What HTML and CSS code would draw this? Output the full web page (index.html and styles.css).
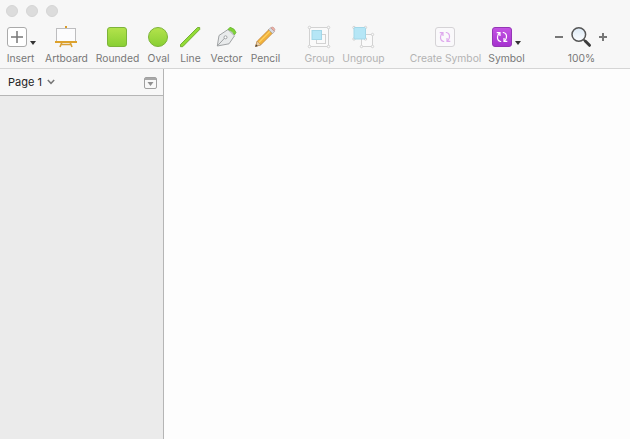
FILE: index.html
```html
<!DOCTYPE html>
<html lang="en">
<head>
<meta charset="utf-8">
<title>Untitled</title>
<link rel="stylesheet" href="styles.css">
</head>
<body>
<div class="window">
  <header class="chrome">
    <div class="lights"><i></i><i></i><i></i></div>
    <div class="toolbar">
      <div class="tool insert">
        <svg width="40" height="26"><rect x="7.5" y="3.5" width="19" height="19" rx="2.5" fill="#fff" stroke="#aaa"/><path d="M11 13h12M17 7v12" stroke="#777" stroke-width="1.5"/><path d="M30 17h6l-3 4z" fill="#333"/></svg>
        <span>Insert</span>
      </div>
      <div class="tool artboard">
        <svg width="40" height="26"><path d="M20 2v3" stroke="#d99c2b" stroke-width="2"/><path d="M16 18l-2 5M24 18l2 5M15 20.5h10" stroke="#d9a036" stroke-width="1.6" fill="none"/><rect x="10.5" y="4.5" width="19" height="13" fill="#fcfcfd" stroke="#bdbdbf"/><path d="M9 18h22" stroke="#dda22c" stroke-width="2"/></svg>
        <span>Artboard</span>
      </div>
      <div class="tool rounded">
        <svg width="40" height="26"><defs><linearGradient id="green" x1="0" y1="0" x2="0" y2="1"><stop offset="0" stop-color="#b4e34c"/><stop offset="1" stop-color="#88cf33"/></linearGradient></defs><rect x="10.5" y="3.5" width="19" height="19" rx="2.5" fill="url(#green)" stroke="#7db43a"/></svg>
        <span>Rounded</span>
      </div>
      <div class="tool oval">
        <svg width="40" height="26"><circle cx="20" cy="13" r="9.5" fill="url(#green)" stroke="#7db43a"/></svg>
        <span>Oval</span>
      </div>
      <div class="tool line">
        <svg width="40" height="26"><path d="M10.500 20.500L27.500 3.500h2.200v2L12.700 22.700h-2.200z" fill="#93dc35" stroke="#6ca82e" stroke-width=".9"/></svg>
        <span>Line</span>
      </div>
      <div class="tool vector">
        <svg width="40" height="26"><path d="M11.300 22L13 11.500 22 5.500l6.500 6.300-5.500 8z" fill="#e9ebec" stroke="#a0a3a5"/><path d="M11.500 21.700l7.500-8" stroke="#95999b" stroke-width=".9"/><circle cx="19.500" cy="13.300" r="1.500" fill="#fff" stroke="#95999b" stroke-width=".9"/><path d="M22 5.400l2-2.100q4.600.8 6 5.200l-1.500 2.300q-1.700-4-6.500-5.400z" fill="#7fd336" stroke="#67b52d" stroke-width=".8"/></svg>
        <span>Vector</span>
      </div>
      <div class="tool pencil">
        <svg width="40" height="26"><path d="M10.500 22.500l1.700-5.300 11.800-11.700 3.600 3.600-11.800 11.700z" fill="#f2b23b" stroke="#b9782e" stroke-width=".7"/><path d="M13.500 18.800L25.200 7.100" stroke="#ffd465" stroke-width="1.200"/><path d="M10.500 22.500l1.700-5.300 3.600 3.600z" fill="#ebcea2" stroke="#ad8457" stroke-width=".5"/><path d="M10.300 22.700l.8-2.500 1.700 1.700z" fill="#444"/><path d="M23.600 5.700l2-2 3.900 3.900-2 2z" fill="#d9dade" stroke="#92929a" stroke-width=".6"/><path d="M25.800 3.700q1.600-1.400 3.100 0 1.900 1.700.4 3.600z" fill="#eeb1a6" stroke="#b8847c" stroke-width=".5"/></svg>
        <span>Pencil</span>
      </div>
      <div class="tool group off">
        <svg width="40" height="26" fill="#fafafa" stroke="#d2d2d2"><rect x="10.500" y="3.500" width="19" height="19"/><rect x="17.500" y="10.500" width="9" height="9"/><rect x="13" y="6.500" width="9.500" height="9" fill="#b5e6f6" stroke="#a2d7e8"/><g><circle cx="10.500" cy="3.500" r="1.300"/><circle cx="29.500" cy="3.500" r="1.300"/><circle cx="10.500" cy="22.500" r="1.300"/><circle cx="29.500" cy="22.500" r="1.300"/></g></svg>
        <span>Group</span>
      </div>
      <div class="tool ungroup off">
        <svg width="40" height="26" fill="#fafafa" stroke="#d2d2d2"><rect x="18.500" y="10.500" width="11" height="12"/><g><circle cx="11" cy="3.500" r="1.200"/><circle cx="22.500" cy="3.500" r="1.200"/><circle cx="11" cy="15" r="1.200"/><circle cx="22.500" cy="15" r="1.200"/><circle cx="29.500" cy="10.500" r="1.200"/><circle cx="18.500" cy="22.500" r="1.200"/><circle cx="29.500" cy="22.500" r="1.200"/></g><rect x="11" y="3.500" width="11.500" height="11.500" rx="1" fill="#b5e6f6" stroke="#a2d7e8"/></svg>
        <span>Ungroup</span>
      </div>
      <div class="tool create off">
        <svg width="40" height="26"><defs><g id="cycle" fill="none"><path d="M-.8 4.500H-1.500Q-4.800 3.500-4.500 0-4.300-2.500-2.500-4M-5.300-4.300h3.300v3.300"/><path d="M.8-4.500H1.500Q4.800-3.500 4.500 0 4.300 2.500 2.500 4M5.300 4.300H2V1"/></g></defs><rect x="10.500" y="3.500" width="19" height="19" rx="2.500" fill="#faf9fb" stroke="#d5d3d6"/><use href="#cycle" x="20" y="13" stroke="#dfa9ed" stroke-width="1.200"/></svg>
        <span>Create Symbol</span>
      </div>
      <div class="tool symbol">
        <svg width="40" height="26"><defs><linearGradient id="purple" x1="0" y1="0" x2="0" y2="1"><stop offset="0" stop-color="#c454e4"/><stop offset="1" stop-color="#a531cf"/></linearGradient></defs><rect x="6.500" y="3.500" width="19" height="19" rx="2.500" fill="url(#purple)" stroke="#9436b5"/><use href="#cycle" x="16" y="13" stroke="#fff" stroke-width="1.200"/><path d="M29 17h6l-3 4z" fill="#333"/></svg>
        <span>Symbol</span>
      </div>
      <div class="tool zoom">
        <svg width="60" height="26"><defs><linearGradient id="lens" x1="0" y1="0" x2="0" y2="1"><stop offset="0" stop-color="#dce9f5"/><stop offset="1" stop-color="#fbfdff"/></linearGradient></defs><path d="M4 13h8M48 13h8M52 9v8" stroke="#777" stroke-width="2"/><path d="M32.500 15.500l2 2" stroke="#555" stroke-width="2"/><path d="M34.500 17.300l4 4" stroke="#3c3c3c" stroke-width="3" stroke-linecap="round"/><circle cx="27.800" cy="10.500" r="6.800" fill="url(#lens)" stroke="#555" stroke-width="1.500"/></svg>
        <span>100%</span>
      </div>
    </div>
  </header>
  <main class="workspace">
    <aside class="sidebar">
      <div class="pages">
        <span class="page">Page 1</span>
        <svg class="chevron" width="8" height="6"><path d="M.8 1l3.200 3.300L7.200 1" fill="none" stroke="#777" stroke-width="1.500"/></svg>
        <svg class="list" width="13" height="12"><rect x=".5" y=".5" width="12" height="11" rx="1.500" fill="#f8f8f8" stroke="#a0a0a0"/><path d="M1 1h11v2H1z" fill="#a8a8a8"/><path d="M3.500 5h6l-3 4z" fill="#909090"/></svg>
      </div>
    </aside>
    <section class="canvas"></section>
  </main>
</div>
</body>
</html>
```
FILE: styles.css
```css
body {
  margin: 0;
  font-family: Inter, "Liberation Sans", sans-serif;
}

.window {
  display: flex;
  flex-direction: column;
  width: 630px;
  height: 439px;
  overflow: hidden;
}

.window svg {
  display: block;
  flex: none;
}

.chrome {
  box-sizing: border-box;
  height: 69px;
  background: #f7f7f7;
  border-bottom: 1px solid #d5d5d5;
}

.lights {
  display: flex;
  gap: 8px;
  height: 19px;
  padding: 5px 0 0 6px;
}

.lights i {
  box-sizing: border-box;
  width: 12px;
  height: 12px;
  border: 1px solid #d5d5d5;
  border-radius: 50%;
  background: #dcdcdc;
}

.toolbar {
  display: flex;
}

.tool {
  display: flex;
  flex: none;
  flex-direction: column;
  align-items: center;
  color: #777;
  font-size: 10.3px;
  line-height: 14px;
  white-space: nowrap;
}

.tool span {
  padding: 1px 0 0 1px;
}

.off { color: #b3b3b3; }

.insert { width: 40px; }
.artboard { width: 52px; }
.rounded { width: 50px; }
.oval { width: 32px; }
.line { width: 32px; }
.vector { width: 40px; }
.pencil { width: 38px; }
.group { width: 40px; margin-left: 15px; }
.ungroup { width: 48px; }
.create { width: 80px; margin-left: 18px; }
.symbol { width: 42px; }
.zoom { width: 60px; margin-left: 24px; }

.workspace {
  display: flex;
  flex: 1;
}

.sidebar {
  width: 163px;
  background: #ebebeb;
  border-right: 1px solid #b5b5b5;
}

.pages {
  display: flex;
  align-items: center;
  height: 26px;
  padding: 0 6px 0 8px;
  background: #f7f7f7;
  border-bottom: 1px solid #b5b5b5;
}

.page {
  color: #222;
  font-size: 11px;
  line-height: 14px;
}

.chevron { margin-left: 5px; }
.list { margin: 2px 0 0 auto; }

.canvas {
  flex: 1;
  background: #fdfdfd;
}
```
